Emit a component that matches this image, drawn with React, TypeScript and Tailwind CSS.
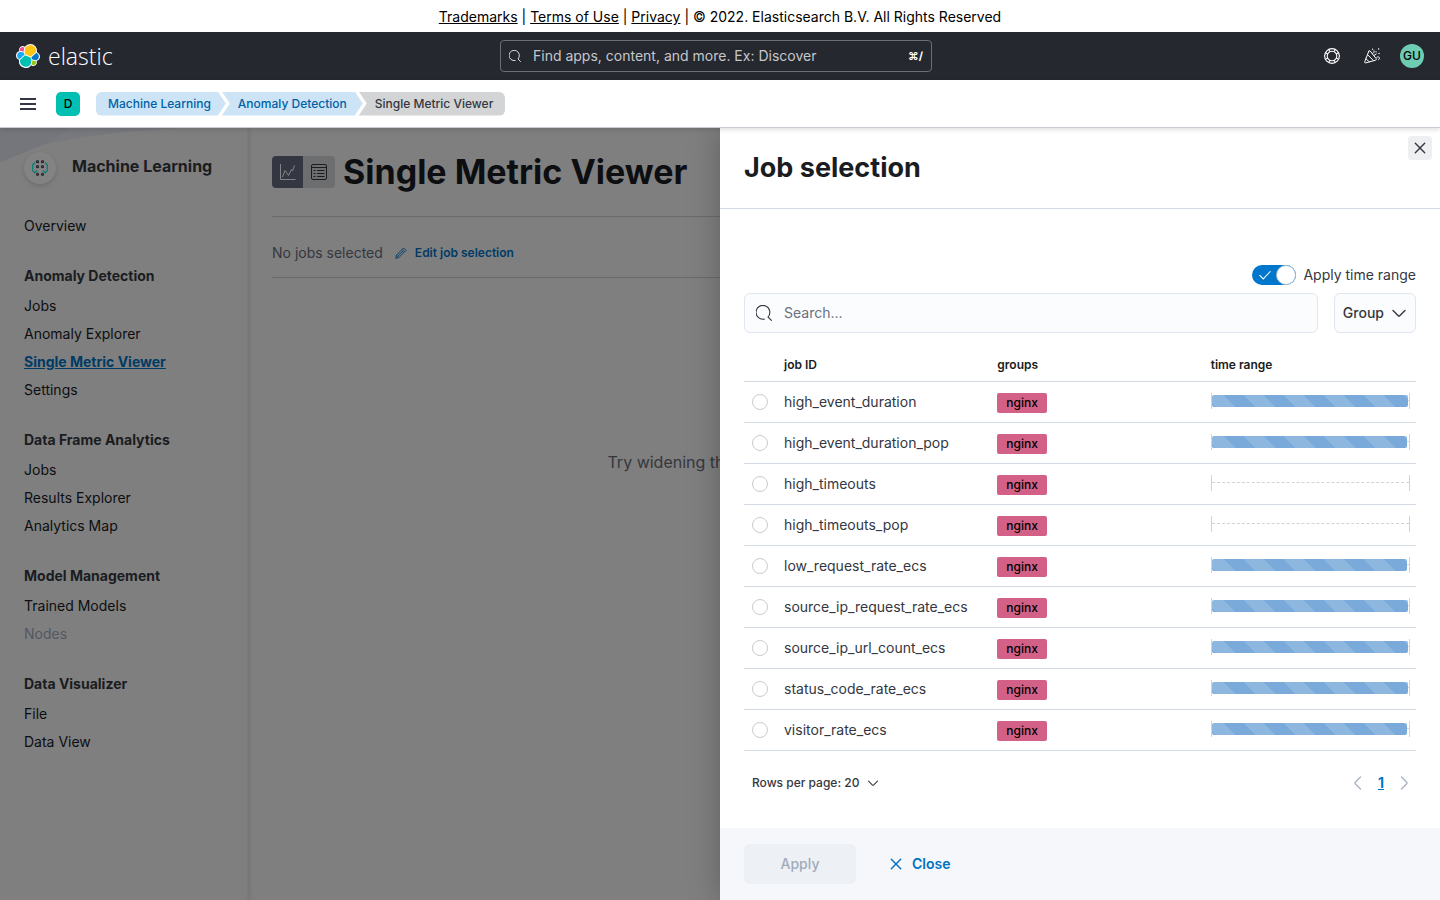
import React from 'react';

type NavSection = { title?: string; items: { label: string; active?: boolean; disabled?: boolean }[] };

const sections: NavSection[] = [
  { items: [{ label: 'Overview' }] },
  {
    title: 'Anomaly Detection',
    items: [
      { label: 'Jobs' },
      { label: 'Anomaly Explorer' },
      { label: 'Single Metric Viewer', active: true },
      { label: 'Settings' },
    ],
  },
  { title: 'Data Frame Analytics', items: [{ label: 'Jobs' }, { label: 'Results Explorer' }, { label: 'Analytics Map' }] },
  { title: 'Model Management', items: [{ label: 'Trained Models' }, { label: 'Nodes', disabled: true }] },
  { title: 'Data Visualizer', items: [{ label: 'File' }, { label: 'Data View' }] },
];

const jobs: { id: string; fill: number | null }[] = [
  { id: 'high_event_duration', fill: 99.5 },
  { id: 'high_event_duration_pop', fill: 99 },
  { id: 'high_timeouts', fill: null },
  { id: 'high_timeouts_pop', fill: null },
  { id: 'low_request_rate_ecs', fill: 99 },
  { id: 'source_ip_request_rate_ecs', fill: 99.5 },
  { id: 'source_ip_url_count_ecs', fill: 99.5 },
  { id: 'status_code_rate_ecs', fill: 99.5 },
  { id: 'visitor_rate_ecs', fill: 99 },
];

function ElasticMark() {
  return (
    <svg viewBox="0 0 32 32" className="size-6" aria-hidden="true">
      <path
        fill="#fff"
        d="M32 16.77c0-2.68-1.66-5.02-4.16-5.93A8.97 8.97 0 0 0 19.05.06a8.97 8.97 0 0 0-7.23 3.66 4.79 4.79 0 0 0-7.34 5.47A6.36 6.36 0 0 0 0 15.19c0 2.69 1.67 5.04 4.18 5.95a8.97 8.97 0 0 0 16.02 7.12 4.74 4.74 0 0 0 7.32-5.47A6.36 6.36 0 0 0 32 16.77"
      />
      <path fill="#FEC514" d="m12.58 13.79 7.01 3.2 7.06-6.19A7.86 7.86 0 0 0 19.05 1.3a7.86 7.86 0 0 0-6.49 3.43l-1.18 6.1z" />
      <path fill="#00BFB3" d="M5.33 21.22a7.97 7.97 0 0 0 14.14 6l1.17-6.08-1.56-2.98-7.04-3.2z" />
      <path fill="#F04E98" d="m5.29 9.09 4.8 1.14 1.06-5.47a3.79 3.79 0 0 0-5.86 4.33" />
      <path fill="#1BA9F5" d="M4.87 10.23a5.35 5.35 0 0 0-.07 9.98l6.74-6.09-1.24-2.64z" />
      <path fill="#93C90E" d="M20.87 27.22a3.78 3.78 0 0 0 5.84-4.3l-4.79-1.12z" />
      <path fill="#0077CC" d="m21.85 20.56 5.27 1.23a5.35 5.35 0 0 0 .07-9.98l-6.9 6.04z" />
    </svg>
  );
}

function SearchIcon({ className }: { className: string }) {
  return (
    <svg viewBox="0 0 16 16" className={className} fill="none" stroke="currentColor" strokeWidth="1.1" strokeLinecap="round" aria-hidden="true">
      <path d="M8.300 14.100A6.900 6.900 0 1 1 12 12L15.400 15.400" />
    </svg>
  );
}

function Chevron({ className, d }: { className: string; d: string }) {
  return (
    <svg viewBox="0 0 16 16" className={className} fill="none" stroke="currentColor" strokeWidth="1.4" strokeLinecap="round" strokeLinejoin="round" aria-hidden="true">
      <path d={d} />
    </svg>
  );
}
const DOWN = 'M2 5.5 7.3 10.7a1 1 0 0 0 1.4 0L14 5.5';
const LEFT = 'M10.5 2 5.3 7.3a1 1 0 0 0 0 1.4L10.5 14';
const RIGHT = 'M5.5 2 10.7 7.3a1 1 0 0 1 0 1.4L5.5 14';
const CROSS = 'M3.3 3.3 12.7 12.7M12.7 3.3 3.3 12.7';

function HelpIcon() {
  return (
    <svg viewBox="0 0 16 16" className="size-4" fill="none" stroke="currentColor" strokeWidth="1.1" aria-hidden="true">
      <circle cx="8" cy="8" r="7.4" />
      <circle cx="8" cy="8" r="4.8" />
      <path d="M4.800 1.500 6 3.800M11.200 1.500 10 3.800M4.800 14.500 6 12.200M11.200 14.500 10 12.200M1.500 4.800 3.800 6M1.500 11.200 3.800 10M14.500 4.800 12.200 6M14.500 11.200 12.200 10" />
    </svg>
  );
}

function CheerIcon() {
  return (
    <svg viewBox="0 0 16 16" className="size-4" fill="none" stroke="currentColor" strokeLinecap="round" strokeLinejoin="round" aria-hidden="true">
      <path d="M4.800 3.200.7 13.900c-.2.7.2 1.200.9 1l10-2.700c.8-.3 1-1 .5-1.600L6.200 3c-.5-.5-1.200-.4-1.400.2Z" />
      <path d="M3.700 6.800 9.300 12.500M2 10.800l3.200 3M8.500 5.500c1.400-.3 1.900-1.300 1.500-2.800M10.300 7.300l1.900-1.300M12.800 9.300c1.100-.8 2.300-.4 2.600.5.200.9-.2 1.700-.8 1.900" />
      <path d="M8.500 1.200h.1M12 3.800h.1M14.600 1h.1M15 5.500h.1" strokeWidth="1.300" />
    </svg>
  );
}

function MlIcon() {
  return (
    <svg viewBox="0 0 16 16" className="size-4" fill="none" aria-hidden="true">
      <path d="M3 2.500.7 4.800v5.500L2.500 12.700 5.300 10.700M13 2.500l2.300 2.300v5.500L13.500 12.700 10.700 10.700" stroke="#017d73" strokeWidth="1.200" />
      <g stroke="#25272e" strokeWidth="1.200">
        <circle cx="5.500" cy="1.700" r="1" />
        <circle cx="10.500" cy="1.700" r="1" />
        <circle cx="5.500" cy="6.700" r="1" />
        <circle cx="10.500" cy="6.700" r="1" />
        <circle cx="5.500" cy="14.300" r="1" />
        <circle cx="10.500" cy="14.300" r="1" />
      </g>
    </svg>
  );
}

function Header() {
  return (
    <header className="flex h-12 items-center bg-[#25282f] px-2 text-white">
      <div className="flex flex-1 items-center">
        <a href="#home" aria-label="Elastic home" className="flex items-center gap-2 px-2">
          <ElasticMark />
          <span className="font-['Open_Sans',sans-serif] text-[23px] leading-8 font-light">elastic</span>
        </a>
      </div>
      <label className="flex h-8 w-[432px] items-center gap-3 rounded border border-[#6a6d75] px-2">
        <SearchIcon className="size-3" />
        <input
          type="text"
          aria-label="Search Elastic"
          placeholder="Find apps, content, and more. Ex: Discover"
          className="min-w-0 flex-1 bg-transparent text-sm outline-none placeholder:text-[#c5c7cc]"
        />
        <span className="text-[11px] font-bold">⌘/</span>
      </label>
      <div className="flex flex-1 items-center justify-end gap-4 pr-2">
        <button type="button" aria-label="Help menu" className="grid size-6 place-items-center">
          <HelpIcon />
        </button>
        <button type="button" aria-label="News feed" className="grid size-6 place-items-center">
          <CheerIcon />
        </button>
        <button type="button" aria-label="Account menu" className="grid size-6 place-items-center rounded-full bg-[#6dccb1] text-xs font-medium text-black">
          GU
        </button>
      </div>
    </header>
  );
}

function Breadcrumbs() {
  return (
    <div className="relative z-10 flex h-12 items-center border-b border-[#c9cbd3] bg-white px-4 shadow-[0_2px_5px_rgba(0,0,0,0.12)]">
      <button type="button" aria-label="Toggle navigation" className="grid size-6 place-items-center text-[#343741]">
        <svg viewBox="0 0 16 12" className="h-3 w-4" fill="currentColor" aria-hidden="true">
          <path d="M0 0h16v2H0zM0 5h16v2H0zM0 10h16v2H0z" />
        </svg>
      </button>
      <button type="button" aria-label="Default space" className="ml-4 grid size-6 place-items-center rounded-[5px] bg-[#00bfb3] text-xs font-medium text-black">
        D
      </button>
      <nav aria-label="Breadcrumb" className="ml-4 flex text-xs leading-6 font-medium">
        <a href="#ml" className="rounded-l-md bg-[#cce4f5] pr-[15px] pl-3 text-[#0061a6] [clip-path:polygon(0_0,calc(100%-8px)_0,100%_50%,calc(100%-8px)_100%,0_100%)]">
          Machine Learning
        </a>
        <a href="#anomaly" className="-ml-1 bg-[#cce4f5] pr-4 pl-4 text-[#0061a6] [clip-path:polygon(0_0,calc(100%-8px)_0,100%_50%,calc(100%-8px)_100%,0_100%,8px_50%)]">
          Anomaly Detection
        </a>
        <span aria-current="page" className="-ml-1 rounded-r-md bg-[#d3d4d5] pr-3 pl-4 text-[#343741] [clip-path:polygon(0_0,100%_0,100%_100%,0_100%,8px_50%)]">
          Single Metric Viewer
        </span>
      </nav>
    </div>
  );
}

function Sidebar() {
  return (
    <aside className="relative w-62 shrink-0 overflow-hidden border-r border-[#7a7a7a] px-6 pt-6 shadow-[1px_0_5px_rgba(0,0,0,0.12)]">
      <svg viewBox="0 0 248 34" className="absolute top-0 left-0 h-[34px] w-full" aria-hidden="true">
        <path d="M0 34 40 18Q80 6 180 0H0Z" fill="#77797e" />
        <path d="M0 34 40 18Q55 10 70 0H0Z" fill="#74767b" />
      </svg>
      <div className="relative flex items-start gap-4">
        <span className="grid size-8 place-items-center rounded-full bg-[#838383] shadow-[0_2px_4px_rgba(0,0,0,0.15)]">
          <MlIcon />
        </span>
        <h2 className="text-base leading-7 font-bold">Machine Learning</h2>
      </div>
      <nav aria-label="Machine Learning" className="mt-7 flex flex-col gap-6 text-sm">
        {sections.map((s, i) => (
          <div key={i}>
            {s.title && <h3 className="mb-1 leading-6 font-bold text-[#1a1c21]">{s.title}</h3>}
            <ul>
              {s.items.map((it) => (
                <li key={it.label} className="leading-7">
                  <a
                    href="#page"
                    aria-disabled={it.disabled}
                    className={
                      it.active ? 'font-bold text-[#003b66] underline' : it.disabled ? 'text-[#55585f]' : 'text-[#0d0e11]'
                    }
                  >
                    {it.label}
                  </a>
                </li>
              ))}
            </ul>
          </div>
        ))}
      </nav>
    </aside>
  );
}

function Page() {
  return (
    <main className="min-w-0 flex-1 px-6 pt-5">
      <div className="flex items-center gap-2 border-b border-[#696b70] pb-5">
        <div className="flex overflow-hidden rounded">
          <button type="button" aria-label="Single metric viewer" className="grid size-8 place-items-center bg-[#343741] text-[#838383]">
            <svg viewBox="0 0 16 16" className="size-4" fill="none" stroke="currentColor" aria-hidden="true">
              <path d="M.5 0v15.500H15.500M2.500 13 5 6.500l3.500 5 3-6 1 1.500L14.500 1.500" />
            </svg>
          </button>
          <button type="button" aria-label="Anomaly explorer" className="-ml-px grid size-8 place-items-center bg-[#6d6e70] text-[#1a1c21]">
            <svg viewBox="0 0 16 16" className="size-4" fill="none" stroke="currentColor" aria-hidden="true">
              <rect x=".5" y=".5" width="15" height="15" rx="1.500" />
              <path d="M1 3.500h14M2.500 6.500h2M2.500 9.500h2M2.500 12.500h2M6 6.500h7.500M6 9.500h7.500M6 12.500h7.500" />
            </svg>
          </button>
        </div>
        <h1 className="text-[34px] leading-12 font-bold whitespace-nowrap text-[#0d0e11]">Single Metric Viewer</h1>
      </div>
      <div className="flex items-center gap-3 border-b border-[#696b70] pt-[30px] pb-[18px]">
        <span className="text-sm leading-3 text-[#35373e]">No jobs selected</span>
        <button type="button" className="flex items-center gap-2 text-xs leading-3 font-semibold text-[#003b66]">
          <svg viewBox="0 0 16 16" className="size-3" fill="none" stroke="currentColor" strokeWidth="1.2" aria-hidden="true">
            <path d="m11.500 1.300 3.200 3.200L5 14.200l-4 .8.800-4zM9.500 3.300l3.200 3.200M3.500 12.500l7-7M1.800 11 5 14.200" />
          </svg>
          Edit job selection
        </button>
      </div>
      <p className="mt-43 text-center text-base leading-6 whitespace-nowrap text-[#35373e]">
        Try widening the time selection or moving further back in time.
      </p>
    </main>
  );
}

function TimeRange({ fill }: { fill: number | null }) {
  return (
    <div className="mr-1.5 flex h-4 items-center border-x border-[#d3d3d3]">
      <div className="relative flex h-3 w-full items-center">
        <div className="w-full border-t border-dashed border-[#d3d3d3]" />
        {fill !== null && (
          <div
            className="absolute inset-y-0 left-0 rounded-xs bg-[#79aad9] bg-[linear-gradient(45deg,rgba(255,255,255,0.15)_25%,transparent_25%,transparent_50%,rgba(255,255,255,0.15)_50%,rgba(255,255,255,0.15)_75%,transparent_75%,transparent)] bg-size-[40px_40px] bg-position-[-8px_0px]"
            style={{ width: `${fill}%` }}
          />
        )}
      </div>
    </div>
  );
}

function JobTable() {
  return (
    <table className="mt-4 w-full table-fixed border-collapse text-left text-sm">
      <colgroup>
        <col className="w-8" />
        <col />
        <col />
        <col />
      </colgroup>
      <thead>
        <tr className="h-8 border-b border-[#d3dae6] text-xs text-[#1a1c21]">
          <td />
          <th scope="col" className="px-2 font-semibold">job ID</th>
          <th scope="col" className="px-2 font-semibold">groups</th>
          <th scope="col" className="px-2 font-semibold">time range</th>
        </tr>
      </thead>
      <tbody>
        {jobs.map((job) => (
          <tr key={job.id} className="h-[41px] border-b border-[#d3dae6]">
            <td className="pl-2 align-middle">
              <input
                type="radio"
                name="job"
                id={job.id}
                className="block size-4 appearance-none rounded-full border border-[#c9cbcd] bg-white checked:border-[5px] checked:border-[#0077cc]"
              />
            </td>
            <td className="px-2">
              <label htmlFor={job.id}>{job.id}</label>
            </td>
            <td className="px-2">
              <span className="mt-0.5 block w-fit rounded-xs bg-[#d36086] px-[9px] text-xs leading-5 font-medium text-black">nginx</span>
            </td>
            <td className="pb-0.5 pl-2">
              <TimeRange fill={job.fill} />
            </td>
          </tr>
        ))}
      </tbody>
    </table>
  );
}

function Flyout() {
  return (
    <section role="dialog" aria-labelledby="flyout-title" className="absolute inset-y-0 right-0 flex w-1/2 flex-col bg-white text-[#343741] shadow-[0_0_30px_rgba(0,0,0,0.25)]">
      <button type="button" aria-label="Close this dialog" className="absolute top-2 right-2 grid size-6 place-items-center rounded bg-[#eeeff1]">
        <Chevron className="size-4" d={CROSS} />
      </button>
      <div className="border-b border-[#d3dae6] p-6">
        <h2 id="flyout-title" className="text-[27px] leading-8 font-bold text-[#1a1c21]">Job selection</h2>
      </div>
      <div className="flex-1 px-6 pt-14">
        <label className="flex items-center justify-end gap-[7px] text-sm leading-5">
          <input type="checkbox" role="switch" defaultChecked className="peer sr-only" />
          <span className="flex h-5 w-11 items-center justify-between rounded-full bg-[#0077cc] pl-1.5">
            <svg viewBox="0 0 16 16" className="size-3.5" fill="none" stroke="#fff" strokeWidth="1.2" strokeLinecap="round" aria-hidden="true">
              <path d="m2 8.500 4 4 8-8.500" />
            </svg>
            <span className="size-5 rounded-full border border-[#a5bdd1] bg-white" />
          </span>
          Apply time range
        </label>
        <div className="mt-2 flex gap-4">
          <label className="flex h-10 flex-1 items-center gap-3 rounded-md border border-[#e1e5f0] bg-[#fbfcfd] px-[11px]">
            <SearchIcon className="size-4" />
            <input type="search" aria-label="Search jobs" placeholder="Search..." className="min-w-0 flex-1 bg-transparent text-sm outline-none placeholder:text-[#69707d]" />
          </label>
          <button type="button" className="flex h-10 items-center gap-[7px] rounded-md border border-[#e1e5f0] bg-[#fbfcfd] px-2 text-sm font-medium">
            Group
            <Chevron className="size-4" d={DOWN} />
          </button>
        </div>
        <JobTable />
        <div className="mt-5 flex h-6 items-center justify-between px-2">
          <button type="button" className="flex items-center gap-2 text-xs font-medium">
            Rows per page: 20
            <Chevron className="size-3" d={DOWN} />
          </button>
          <nav aria-label="Pagination" className="-mr-1 flex items-center gap-3 text-[#abb4c4]">
            <button type="button" aria-label="Previous page" disabled>
              <Chevron className="size-4" d={LEFT} />
            </button>
            <button type="button" aria-current="page" className="text-sm font-bold text-[#0077cc] underline">1</button>
            <button type="button" aria-label="Next page" disabled>
              <Chevron className="size-4" d={RIGHT} />
            </button>
          </nav>
        </div>
      </div>
      <footer className="flex items-center bg-[#f5f7fa] px-6 py-4 text-sm font-medium">
        <button type="button" disabled className="h-10 w-28 rounded-md bg-[#edf0f5] text-[#a2abba]">Apply</button>
        <button type="button" className="ml-8 flex h-10 items-center gap-2 font-semibold text-[#0071c2]">
          <Chevron className="size-4" d={CROSS} />
          Close
        </button>
      </footer>
    </section>
  );
}

export default function App() {
  return (
    <div className="flex min-h-screen flex-col overflow-hidden bg-[#7f7f7f] font-[Inter,sans-serif] text-[#1a1c21]">
      <p className="h-8 bg-white pt-0.5 text-center text-sm leading-[30px] text-black">
        <a href="#trademarks" className="underline">Trademarks</a> | <a href="#terms" className="underline">Terms of Use</a> |{' '}
        <a href="#privacy" className="underline">Privacy</a> | © 2022. Elasticsearch B.V. All Rights Reserved
      </p>
      <Header />
      <Breadcrumbs />
      <div className="relative flex flex-1">
        <Sidebar />
        <Page />
        <Flyout />
      </div>
    </div>
  );
}
